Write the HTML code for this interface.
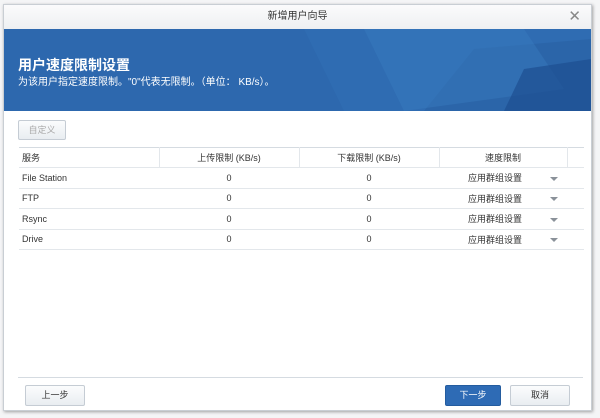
<!DOCTYPE html>
<html><head><meta charset="utf-8"><style>
*{margin:0;padding:0;box-sizing:border-box}
body{width:600px;height:418px;overflow:hidden;background:#f4f5f6;font-family:"Liberation Sans","Noto Sans CJK SC",sans-serif;position:relative}
.dlg{position:absolute;left:3px;top:4px;width:589px;height:407px;background:#fff;border:1px solid #c9ced4;box-shadow:1px 1px 3px rgba(0,0,0,.35)}
.hd{height:24px;background:linear-gradient(#fbfbfc,#eef0f2);text-align:center;font-size:10px;line-height:24px;color:#333}
.x{position:absolute;right:10px;top:2px;font-size:15px;color:#888}
.bn{position:absolute;left:0;top:24px;width:587px;height:82px;background:#2d68ae;overflow:hidden}
.bn h1{position:absolute;left:14px;top:26px;font-size:14px;color:#fff;font-weight:bold}
.bn p{position:absolute;left:14px;top:44px;font-size:10px;color:#fff}
.btn{position:absolute;border:1px solid #c5ccd4;border-radius:2px;background:linear-gradient(#fbfcfd,#e9edf1);font-size:9px;text-align:center;color:#333}
table{position:absolute;left:15px;top:142px;width:565px;border-collapse:collapse;font-size:9px;color:#333}
td,th{height:20.5px;border-bottom:1px solid #e3e7eb;font-weight:normal;padding:0 3px;text-align:center}
th{height:20px;border-top:1px solid #d5dbe1;border-right:1px solid #e3e7eb}
td:first-child,th:first-child{text-align:left}
td.s{text-align:left;padding-left:29px}
.ar{display:inline-block;width:0;height:0;border-left:4px solid transparent;border-right:4px solid transparent;border-top:4px solid #8a9199;margin-left:28px;vertical-align:middle}
</style></head><body>
<div class="dlg">
<div class="hd">新增用户向导</div><div class="x">✕</div>
<div class="bn">
<svg width="587" height="82" style="position:absolute;left:0;top:0">
<polygon points="300,0 587,0 587,82 340,82" fill="#3070b4" opacity=".6"/>
<polygon points="470,20 587,10 587,82 420,82" fill="#2a62a5" opacity=".7"/>
<polygon points="360,0 520,0 560,60 400,82" fill="#3a7cbf" opacity=".45"/>
<polygon points="520,40 587,30 587,82 500,82" fill="#1e4f92" opacity=".7"/>
</svg>
<h1>用户速度限制设置</h1>
<p>为该用户指定速度限制。"0"代表无限制。（单位： KB/s）。</p>
</div>
<div class="btn" style="left:14px;top:115px;width:48px;height:20px;line-height:18px;color:#aaa">自定义</div>
<table>
<tr><th style="width:140px">服务</th><th style="width:140px">上传限制 (KB/s)</th><th style="width:140px">下载限制 (KB/s)</th><th style="width:128px">速度限制</th><th style="border-right:none"></th></tr>
<tr><td>File Station</td><td>0</td><td>0</td><td class="s">应用群组设置<span class="ar"></span></td><td></td></tr>
<tr><td>FTP</td><td>0</td><td>0</td><td class="s">应用群组设置<span class="ar"></span></td><td></td></tr>
<tr><td>Rsync</td><td>0</td><td>0</td><td class="s">应用群组设置<span class="ar"></span></td><td></td></tr>
<tr><td>Drive</td><td>0</td><td>0</td><td class="s">应用群组设置<span class="ar"></span></td><td></td></tr>
</table>
<div style="position:absolute;left:14px;top:372px;width:565px;border-top:1px solid #d5dbe1"></div>
<div class="btn" style="left:21px;top:380px;width:60px;height:21px;line-height:19px">上一步</div>
<div class="btn" style="left:441px;top:380px;width:56px;height:21px;line-height:19px;background:#2e6bb5;border-color:#245c9f;color:#fff">下一步</div>
<div class="btn" style="left:506px;top:380px;width:60px;height:21px;line-height:19px">取消</div>
</div>
</body></html>
